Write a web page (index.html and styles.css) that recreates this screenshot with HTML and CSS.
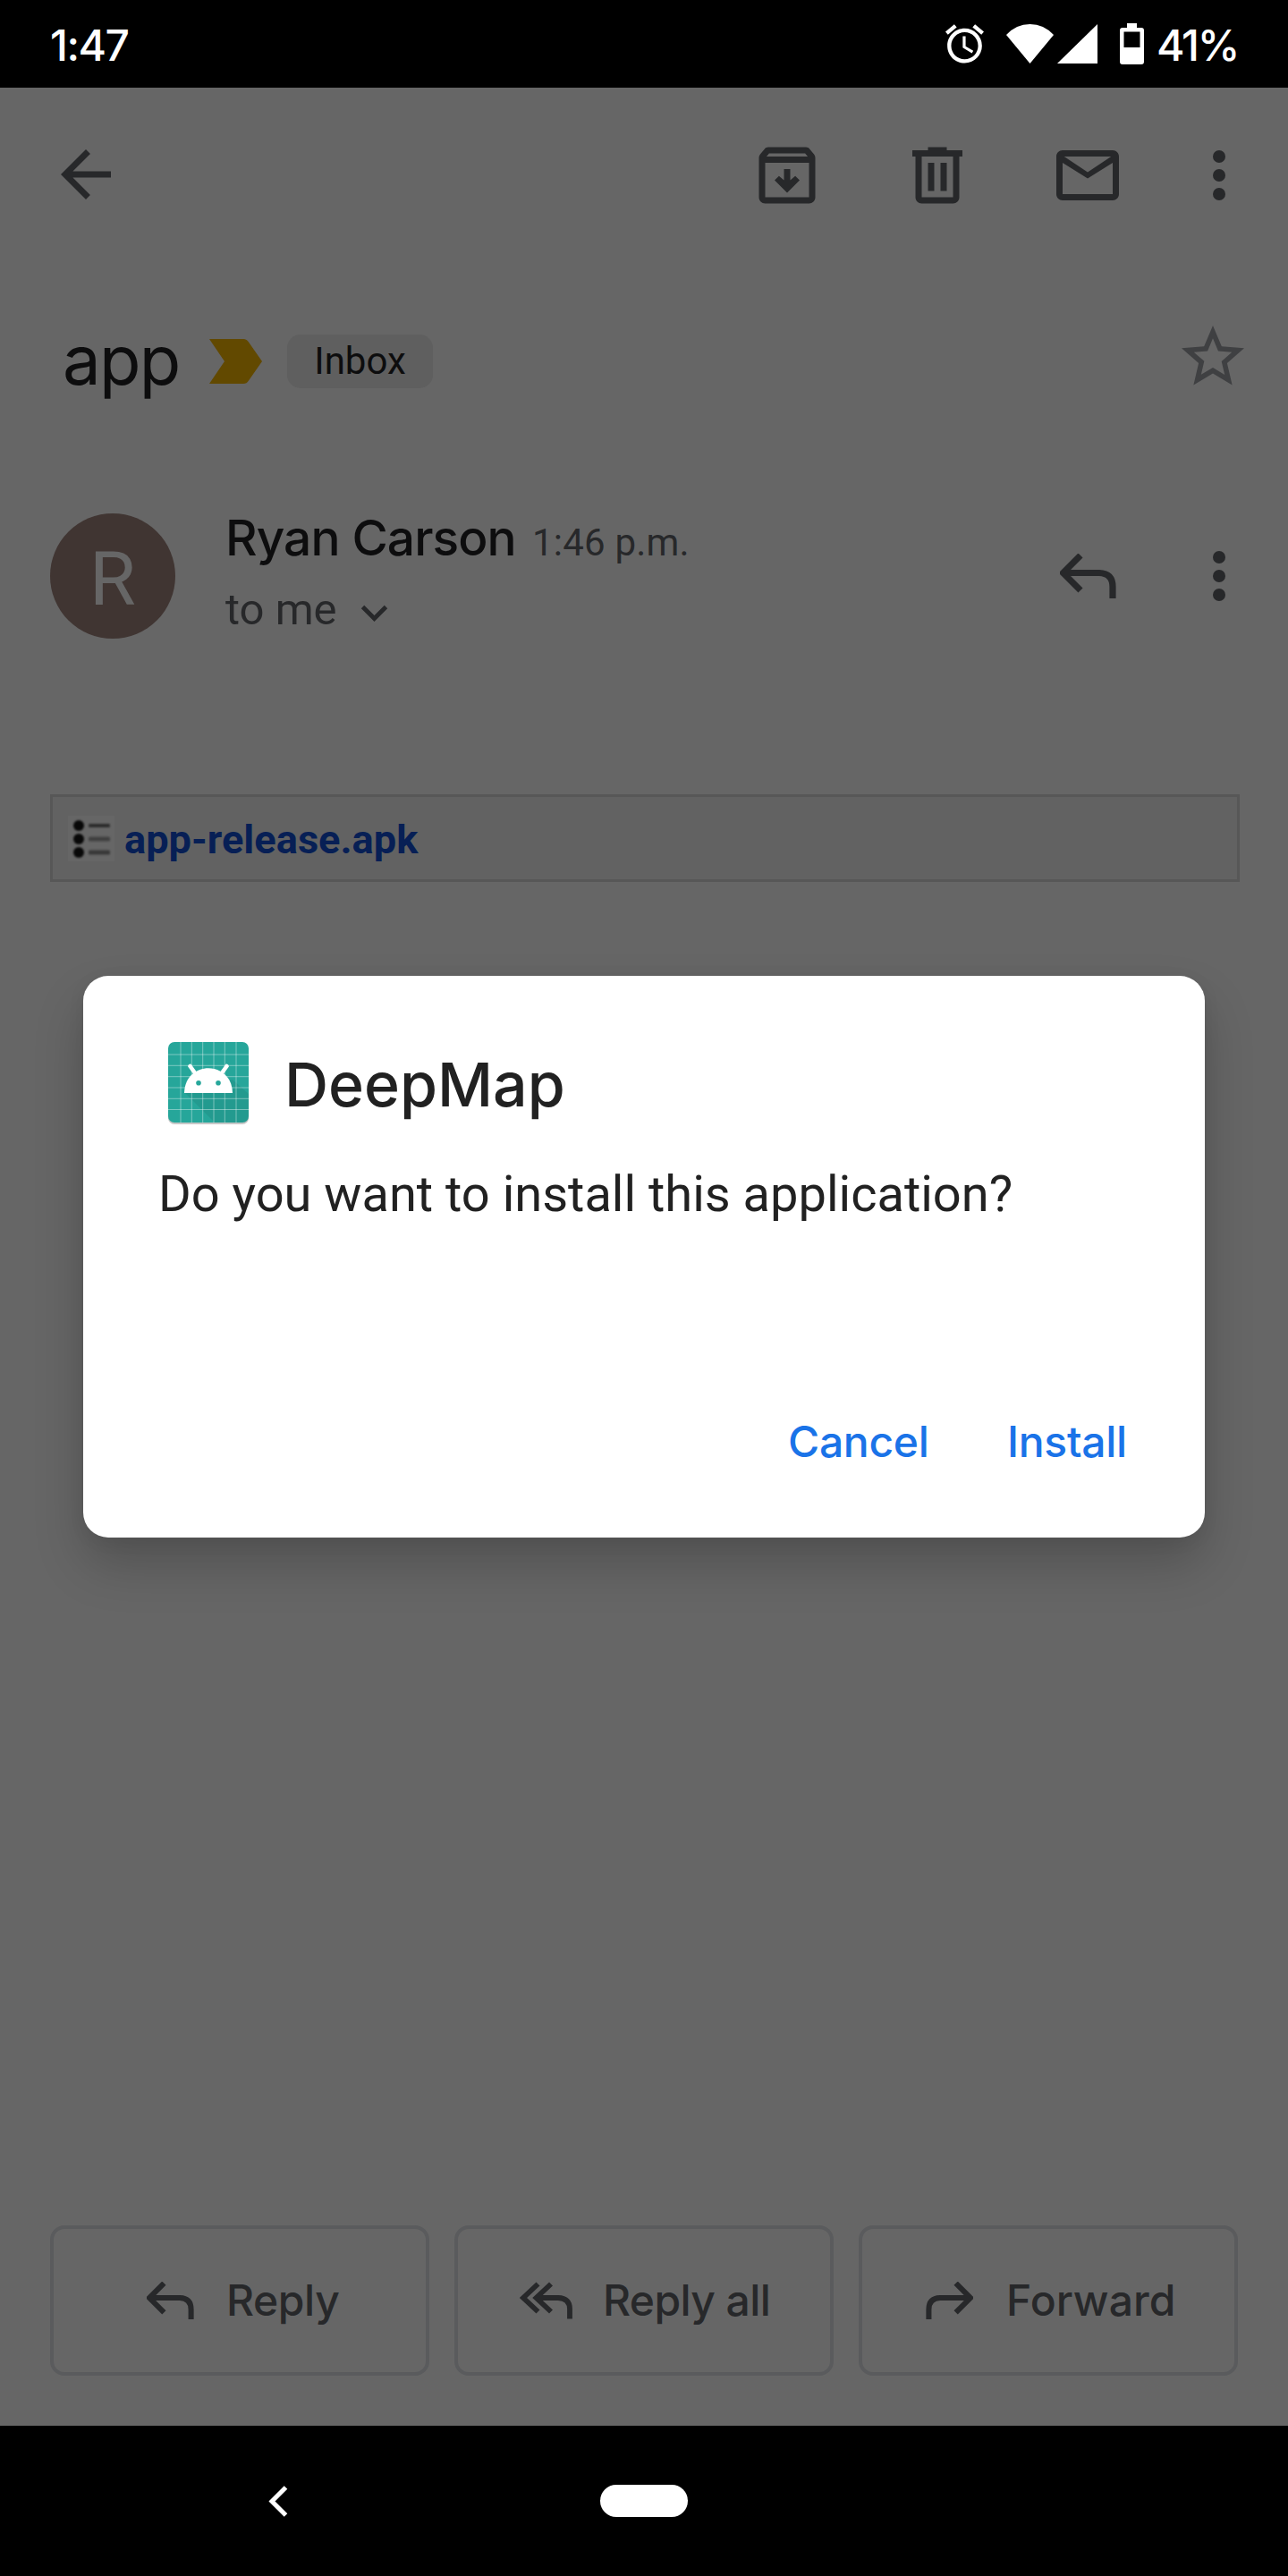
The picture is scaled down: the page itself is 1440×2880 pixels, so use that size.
FILE: index.html
```html
<!DOCTYPE html>
<html lang="en">
<head>
<meta charset="utf-8">
<title>Install DeepMap</title>
<link rel="stylesheet" href="styles.css">
</head>
<body>
<svg class="defs" width="0" height="0">
  <defs>
    <symbol id="dots" viewBox="0 0 24 24"><circle cx="12" cy="6" r="2"/><circle cx="12" cy="12" r="2"/><circle cx="12" cy="18" r="2"/></symbol>
    <symbol id="reply" viewBox="0 0 63 50"><path d="M23 2 3.500 21.500 23 41M5 21.500H44Q59 22 59 37V50" fill="none" stroke="currentColor" stroke-width="7.200"/></symbol>
  </defs>
</svg>
<div class="screen">
  <header class="status">
    <span class="clock">1:47</span>
    <svg class="alarm" viewBox="2 2 20 20"><path d="M22 5.720l-4.600-3.860-1.290 1.530 4.600 3.860L22 5.720zM7.880 3.390 6.600 1.860 2 5.710l1.290 1.530 4.590-3.850zM12.500 8H11v6l4.750 2.850.75-1.230-4-2.370V8zM12 4c-4.970 0-9 4.030-9 9s4.020 9 9 9a9 9 0 0 0 0-18zm0 16c-3.870 0-7-3.130-7-7s3.130-7 7-7 7 3.130 7 7-3.130 7-7 7z"/></svg>
    <svg class="wifi" viewBox="0 0 53 44"><path d="M26.500 44 0 12Q11 0 26.500 0T53 12Z"/></svg>
    <svg class="signal" viewBox="0 0 45 44"><path d="M45 0V44H0Z"/></svg>
    <svg class="battery" viewBox="0 0 27 46"><path fill-rule="evenodd" d="M8 0H19V5H24Q27 5 27 8V43Q27 46 24 46H3Q0 46 0 43V8Q0 5 3 5H8ZM4.500 9.500V27H22.500V9.500Z"/></svg>
    <span class="percent">41%</span>
  </header>

  <main class="mail">
    <nav class="toolbar">
      <svg class="icon back" viewBox="0 0 24 24"><path d="M20 11H7.830l5.590-5.590L12 4l-8 8 8 8 1.410-1.410L7.830 13H20v-2z"/></svg>
      <svg class="icon" viewBox="0 0 24 24"><path fill-rule="evenodd" d="M20.540 5.230l-1.390-1.680C18.880 3.210 18.470 3 18 3H6c-.47 0-.88.21-1.160.55L3.460 5.230C3.170 5.570 3 6.020 3 6.500V19c0 1.100.9 2 2 2h14c1.100 0 2-.9 2-2V6.500c0-.48-.17-.93-.46-1.270zM6.240 5h11.520l.83 1H5.420l.82-1zM5 19V8h14v11H5zM11 10v3.600L9.400 12.200 8 13.600l4 4 4-4-1.400-1.400-1.600 1.400V10z"/></svg>
      <svg class="icon trash" viewBox="0 0 24 24"><path fill-rule="evenodd" d="M15 4V3H9v1H4v2h1v13c0 1.100.9 2 2 2h10c1.100 0 2-.9 2-2V6h1V4h-5zm2 15H7V6h10v13zM9 8h2v9H9zM13 8h2v9h-2z"/></svg>
      <svg class="icon envelope" viewBox="0 0 24 24"><path fill-rule="evenodd" d="M20 4H4c-1.100 0-2 .9-2 2v12c0 1.100.9 2 2 2h16c1.100 0 2-.9 2-2V6c0-1.100-.9-2-2-2zm0 14H4V8l8 5 8-5v10zm-8-7L4.500 6h15L12 11z"/></svg>
      <svg class="icon more"><use href="#dots"/></svg>
    </nav>

    <section class="subject">
      <h1 class="title">app</h1>
      <svg class="marker" viewBox="0 0 59 50"><path d="M0 0H38Q42 0 44 3.500L59 25 44 46.500Q42 50 38 50H0L17 25Z"/></svg>
      <span class="chip">Inbox</span>
      <svg class="icon star" viewBox="0 0 24 24"><path d="M22 9.240l-7.190-.62L12 2 9.190 8.630 2 9.240l5.460 4.730L5.820 21 12 17.270 18.180 21l-1.630-7.030L22 9.240zM12 15.400l-3.760 2.270 1-4.280-3.320-2.880 4.380-.38L12 6.100l1.710 4.040 4.380.38-3.320 2.880 1 4.280L12 15.400z"/></svg>
    </section>

    <section class="sender">
      <div class="avatar">R</div>
      <div class="who">
        <div class="line"><span class="name">Ryan Carson</span><span class="time">1:46 p.m.</span></div>
        <div class="line to"><span class="recipient">to me</span><svg class="chevron" viewBox="0 0 31 19"><path d="M2.500 2.500 15.500 15.500 28.500 2.500" fill="none" stroke="currentColor" stroke-width="4.800"/></svg></div>
      </div>
      <svg class="reply-icon"><use href="#reply"/></svg>
      <svg class="icon more"><use href="#dots"/></svg>
    </section>

    <section class="attachment">
      <svg class="file" viewBox="0 0 52 51"><rect width="52" height="51" fill="#666"/><g class="glyph"><g fill="#080808"><circle cx="12" cy="11" r="6"/><circle cx="12" cy="26" r="6"/><circle cx="12" cy="41" r="6"/></g><g fill="#2c2c2c"><rect x="23" y="9" width="24" height="4" rx="1.500"/><rect x="23" y="23.500" width="24" height="5" rx="1.500" fill="#404040"/><rect x="23" y="38.500" width="24" height="5" rx="1.500" fill="#383838"/></g></g></svg>
      <a class="filename">app-release.apk</a>
    </section>

    <footer class="actions">
      <button class="action reply"><svg class="small"><use href="#reply"/></svg><span class="label">Reply</span></button>
      <button class="action all"><svg class="double" viewBox="0 0 58 41"><path d="M19.500 2 3 17.500 19.500 33M34 2 17.500 17.500 34 33M19 17.500H42Q55 18 55 30V41" fill="none" stroke="currentColor" stroke-width="5.800"/></svg><span class="label">Reply all</span></button>
      <button class="action forward"><svg class="small flip"><use href="#reply"/></svg><span class="label">Forward</span></button>
    </footer>
  </main>

  <footer class="navbar">
    <svg class="nav-back" viewBox="0 0 21 35"><path d="M18.500 2 3 17.500 18.500 33" fill="none" stroke="#fff" stroke-width="5"/></svg>
    <span class="pill"></span>
  </footer>

  <div class="dialog" role="dialog">
    <div class="app">
      <svg class="app-icon" viewBox="0 0 90 94">
        <rect x="0" y="2" width="90" height="90" rx="7" fill="#000" opacity=".22"/>
        <rect width="90" height="90" rx="7" fill="#26a69a"/>
        <path d="M19 57 52 90H83Q90 90 90 83V58L72 42Z" fill="#000" opacity=".07"/>
        <path d="M14 0V90M26.300 0V90M38.700 0V90M51 0V90M63.300 0V90M76 0V90M0 14H90M0 26.300H90M0 38.700H90M0 51H90M0 63.300H90M0 75.500H90" stroke="#fff" stroke-opacity=".4" stroke-width="1"/>
        <path d="M18 57C19 20 71 20 72 57Z" fill="#fff"/>
        <path d="M24.500 27 31 36M65.500 27 59 36" stroke="#fff" stroke-width="4.500" stroke-linecap="round"/>
        <circle cx="34" cy="45.700" r="2.800" fill="#26a69a"/><circle cx="56" cy="45.700" r="2.800" fill="#26a69a"/>
      </svg>
      <h2 class="app-name">DeepMap</h2>
    </div>
    <p class="question">Do you want to install this application?</p>
    <div class="buttons"><button class="cancel">Cancel</button><button class="install">Install</button></div>
  </div>
</div>
</body>
</html>
```
FILE: styles.css
```css
* { box-sizing: border-box; margin: 0; padding: 0; }
body { width: 1440px; height: 2880px; background: #000; overflow: hidden; }
svg { display: block; flex: none; fill: currentColor; overflow: visible; }
button { border: 0; background: none; color: inherit; }
.defs { position: absolute; }
.screen {
  position: relative;
  display: flex;
  flex-direction: column;
  width: 1440px;
  height: 2880px;
  white-space: nowrap;
  font-family: Roboto, "Liberation Sans", sans-serif;
}

.status {
  display: flex;
  align-items: center;
  height: 98px;
  padding: 0 0 0 56px;
  color: #fff;
  font: 500 48px/60px Inter, sans-serif;
}
.clock { width: 100px; letter-spacing: -1.500px; padding-top: 3px; }
.alarm { width: 43px; height: 44px; margin-left: auto; }
.wifi { width: 53px; height: 44px; margin-left: 25px; }
.signal { width: 45px; height: 44px; margin-left: 4px; }
.battery { width: 27px; height: 46px; margin-left: 25px; }
.percent { width: 147px; margin-left: 14px; letter-spacing: -2.200px; padding-top: 3px; }

.mail {
  flex: 1;
  display: flex;
  flex-direction: column;
  background: #666;
  color: #27282a;
}
.icon { width: 84px; height: 84px; }
.toolbar { display: flex; align-items: center; height: 196px; padding: 0 35px 0 54px; }
.back { margin: -2px auto 0 0; }
.trash { margin-left: 84px; }
.envelope { margin-left: 84px; }
.toolbar .more { margin-left: 63px; }

.subject { display: flex; align-items: center; height: 220px; padding: 0 42px 0 70px; }
.title {
  width: 164px;
  color: #0d0d0e;
  font: 400 76px/90px Inter, sans-serif;
  letter-spacing: -1.700px;
  margin-top: -4px;
}
.marker { width: 59px; height: 50px; color: #624900; }
.chip {
  width: 163px;
  height: 60px;
  margin-left: 28px;
  border-radius: 15px;
  background: #5f5f5f;
  color: #0d0d0e;
  font-size: 42px;
  line-height: 60px;
  text-align: center;
}
.star { margin: -10px 0 0 auto; color: #3f4042; }

.sender { display: flex; align-items: center; height: 260px; padding: 0 35px 0 56px; }
.avatar {
  width: 140px;
  height: 140px;
  border-radius: 50%;
  background: #403532;
  color: #666;
  font-size: 84px;
  line-height: 147px;
  text-align: center;
}
.who { width: 700px; margin-left: 56px; }
.line { display: flex; align-items: baseline; height: 76px; line-height: 76px; }
.name { width: 343px; color: #0d0d0e; font: 500 55px/76px Inter, sans-serif; letter-spacing: -.900px; }
.time { font-size: 42px; letter-spacing: .2px; }
.to { height: 86px; line-height: 86px; align-items: center; font-size: 49px; }
.recipient { width: 151px; }
.chevron { width: 31px; height: 19px; margin-top: 6px; }
.reply-icon { width: 63px; height: 50px; margin-left: auto; }
.sender .more { margin-left: 73px; }

.attachment {
  display: flex;
  align-items: center;
  height: 98px;
  margin: 114px 54px 0 56px;
  padding-left: 17px;
  border: 3px solid #575757;
  background: #626262;
}
.file { width: 52px; height: 51px; }
.glyph { filter: blur(.8px); }
.filename { margin: 3px 0 0 11px; color: #071f55; font-size: 45.200px; font-weight: 700; }

.actions { display: flex; gap: 28px; height: 168px; margin: auto 56px 56px; }
.action {
  display: flex;
  align-items: center;
  width: 424px;
  border: 4px solid #5a5b5d;
  border-radius: 16px;
  font: 500 48px/60px Inter, sans-serif;
}
.reply { padding-left: 104px; }
.all { padding-left: 70px; }
.forward { padding-left: 71px; }
.small { width: 53px; height: 42px; }
.double { width: 58px; height: 42px; }
.flip { transform: scaleX(-1); }
.label { margin-left: 36px; letter-spacing: -.400px; }
.all .label { margin-left: 34px; letter-spacing: -.600px; }
.forward .label { margin-left: 37px; letter-spacing: .1px; }

.navbar { display: flex; align-items: center; height: 168px; padding-left: 301px; }
.nav-back { width: 21px; height: 35px; }
.pill { width: 98px; height: 36px; margin-left: 349px; border-radius: 18px; background: #fff; }

.dialog {
  position: absolute;
  left: 93px;
  top: 1091px;
  width: 1254px;
  height: 628px;
  padding: 74px 84px 0;
  border-radius: 28px;
  background: #fff;
  color: #212121;
  box-shadow: 0 30px 56px rgba(0, 0, 0, .2), 0 4px 20px rgba(0, 0, 0, .06);
}
.app { display: flex; align-items: center; height: 94px; padding-left: 11px; }
.app-icon { width: 90px; height: 94px; }
.app-name { margin: 0 0 0 40px; font: 500 68px/80px Inter, sans-serif; letter-spacing: 0; }
.question { margin-top: 36px; font-size: 56px; line-height: 80px; }
.buttons { display: flex; margin-top: 207px; padding-left: 704px; color: #1a73e8; }
.cancel, .install { text-align: left; font: 500 48px/60px Inter, sans-serif; letter-spacing: -.300px; }
.cancel { width: 245px; }
```
